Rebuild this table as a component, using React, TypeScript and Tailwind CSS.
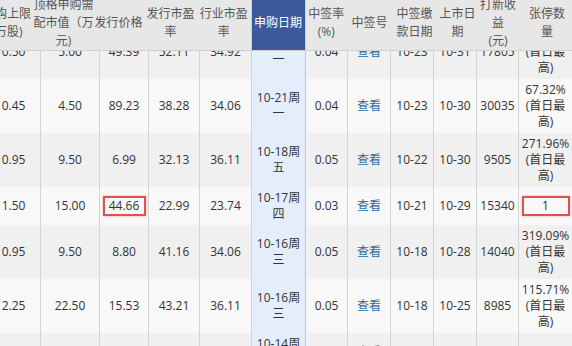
import React from "react";

type Cell = string | { text: string; kind: "link" | "box" | "boxWide" };

const headers: { lines: string[]; shift: string }[] = [
  { lines: ["申购上限", "(万股)"], shift: "mr-[12px]" },
  { lines: ["顶格申购需", "配市值（万", "元)"], shift: "mr-[12px]" },
  { lines: ["发行价格"], shift: "mr-[10px]" },
  { lines: ["发行市盈", "率"], shift: "mr-[6px]" },
  { lines: ["行业市盈", "率"], shift: "mr-[2px]" },
  { lines: ["申购日期"], shift: "" },
  { lines: ["中签率", "(%)"], shift: "" },
  { lines: ["中签号"], shift: "ml-[2px]" },
  { lines: ["中签缴", "款日期"], shift: "ml-[6px]" },
  { lines: ["上市日", "期"], shift: "ml-[6px]" },
  { lines: ["打新收", "益", "(元)"], shift: "ml-[2px]" },
  { lines: ["张停数", "量"], shift: "ml-[4px]" },
];

const link = (text: string): Cell => ({ text, kind: "link" });
const peak = (pct: string) => `${pct}\n(首日最\n高)`;

const rows: Cell[][] = [
  ["0.50", "5.00", "49.39", "52.11", "34.92", "10-21周\n一", "0.04", link("查看"), "10-23", "10-31", "17805", peak("35.72%")],
  ["0.45", "4.50", "89.23", "38.28", "34.06", "10-21周\n一", "0.04", link("查看"), "10-23", "10-30", "30035", peak("67.32%")],
  ["0.95", "9.50", "6.99", "32.13", "36.11", "10-18周\n五", "0.05", link("查看"), "10-22", "10-30", "9505", peak("271.96%")],
  ["1.50", "15.00", { text: "44.66", kind: "box" }, "22.99", "23.74", "10-17周\n四", "0.03", link("查看"), "10-21", "10-29", "15340", { text: "1", kind: "boxWide" }],
  ["0.95", "9.50", "8.80", "41.16", "34.06", "10-16周\n三", "0.05", link("查看"), "10-18", "10-28", "14040", peak("319.09%")],
  ["2.25", "22.50", "15.53", "43.21", "36.11", "10-16周\n三", "0.05", link("查看"), "10-18", "10-25", "8985", peak("115.71%")],
  ["40.70", "407.00", "7.26", "9.26", "7.17", "10-14周\n一", "0.25", link("查看"), "10-16", "10-29", "2240", ""],
];

function Cols() {
  return (
    <colgroup>
      <col className="w-[54px]" />
      <col className="w-[59px]" />
      <col className="w-[49px]" />
      <col className="w-[51px]" />
      <col className="w-[52px]" />
      <col className="w-[54px]" />
      <col className="w-[42px]" />
      <col className="w-[43px]" />
      <col className="w-[43px]" />
      <col className="w-[43px]" />
      <col className="w-[42px]" />
      <col className="w-[54px]" />
    </colgroup>
  );
}

function Lines({ text }: { text: string }) {
  return (
    <div className="flex flex-col items-center">
      {text.split("\n").map((l, i) => (
        <span key={i} className="whitespace-nowrap">
          {l}
        </span>
      ))}
    </div>
  );
}

function BodyCell({ cell, col }: { cell: Cell; col: number }) {
  const isDate = col === 5;
  const base = isDate
    ? "bg-[#e4eefa] border-x border-[#b9c7da]"
    : "border-x border-[#d3d3d3]";

  let content: React.ReactNode;
  if (typeof cell === "string") {
    content = <Lines text={cell} />;
  } else if (cell.kind === "link") {
    content = <span className="text-[#2b6c9f]">{cell.text}</span>;
  } else {
    content = (
      <span
        className={
          "inline-block border-2 border-[#d9534f] shadow-[0_0_2px_#f0a0a0] " +
          (cell.kind === "box" ? "w-[43px]" : "w-[48px]")
        }
      >
        {cell.text}
      </span>
    );
  }

  return <td className={"p-0 py-[3px] text-center align-middle " + base}>{content}</td>;
}

export default function App() {
  return (
    <div
      className="w-[572px] h-[346px] overflow-hidden bg-white text-[12px] text-[#333]"
      style={{ fontFamily: '"Open Sans", "Noto Sans CJK SC", sans-serif' }}
    >
      {/* Header (page is scrolled a little, so its top is cut) */}
      <table className="table-fixed border-collapse w-[586px] ml-[-14px] mt-[-4px] leading-[18px]">
        <Cols />
        <thead>
          <tr className="h-[50px] bg-[#e7e7e7]">
            {headers.map((h, i) => (
              <th
                key={i}
                className={
                  "p-0 font-normal text-center align-middle border-b border-[#cfcfcf] " +
                  (i === 5 ? "bg-[#3b5a9b] text-white border-x border-[#3b5a9b]" : "text-[#555]")
                }
              >
                <div className={"flex flex-col items-center " + h.shift}>
                  {h.lines.map((l, k) => (
                    <span key={k} className="whitespace-nowrap">
                      {l}
                    </span>
                  ))}
                </div>
              </th>
            ))}
          </tr>
        </thead>
      </table>

      {/* Scrolled body viewport: first row partly above the fold */}
      <div className="h-[300px] overflow-hidden">
        <table className="table-fixed border-collapse w-[586px] ml-[-14px] mt-[-26px] leading-[16px]">
          <Cols />
          <tbody>
            {rows.map((row, r) => (
              <tr key={r} className={r % 2 === 0 ? "bg-[#f0f0f0]" : "bg-[#f8f8f8]"}>
                {row.map((cell, c) => (
                  <BodyCell key={c} cell={cell} col={c} />
                ))}
              </tr>
            ))}
          </tbody>
        </table>
      </div>
    </div>
  );
}
